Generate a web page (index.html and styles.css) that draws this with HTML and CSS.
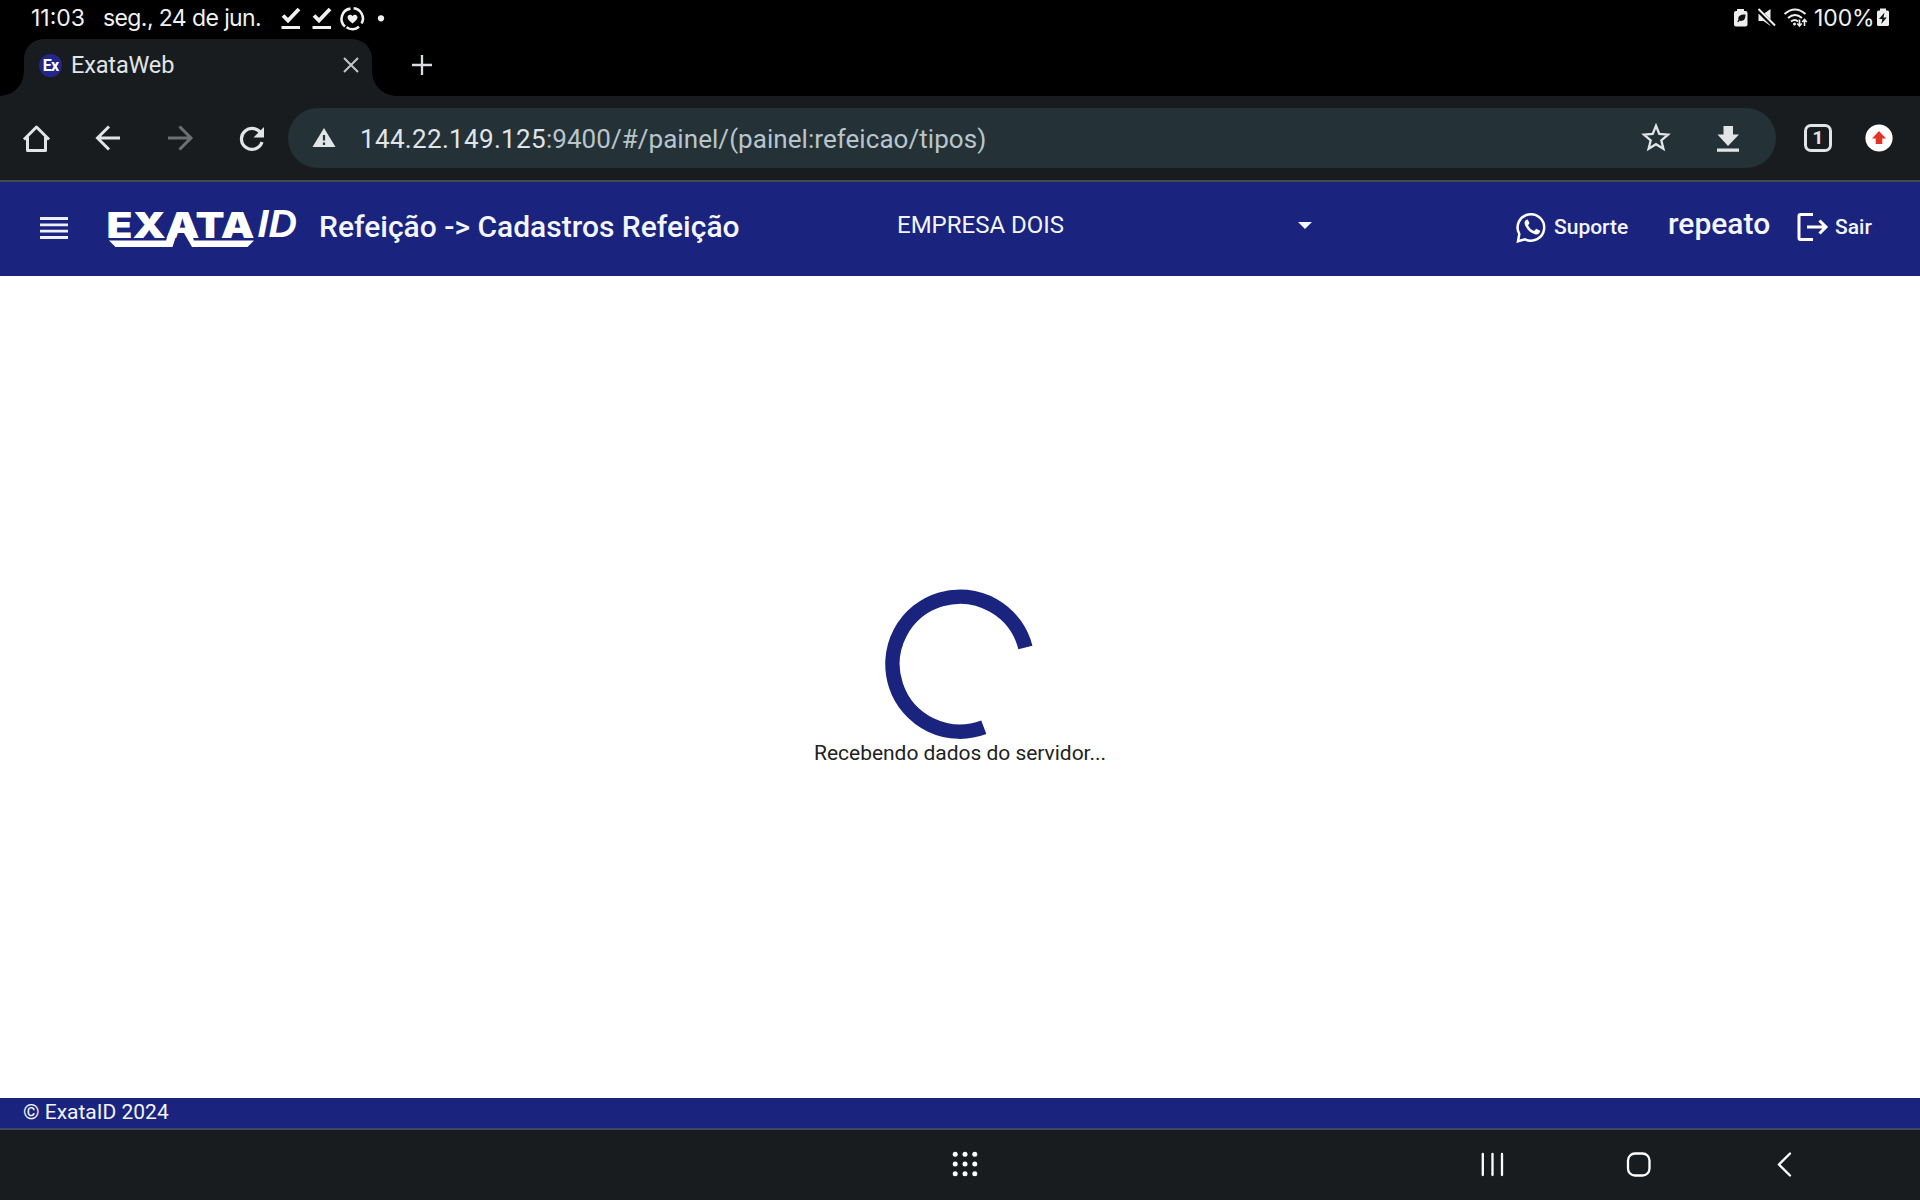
FILE: index.html
```html
<!DOCTYPE html>
<html lang="pt-BR">
<head>
<meta charset="utf-8">
<title>ExataWeb</title>
<link rel="stylesheet" href="styles.css">
</head>
<body>
<div class="status">
  <span class="clock">11:03</span>
  <span class="date">seg., 24 de jun.</span>
  <svg class="status-left" width="110" height="36" viewBox="276 0 110 36">
    <g fill="none" stroke="#f1f1f1" stroke-width="3.2"><path d="M283 15.500l5 5L299 9M314 15.500l5 5L330 9" stroke-width="3.800"/><path d="M281.500 27.500h18.500M312.500 27.500h18.500"/>
    <path d="M350.500 8.600A10.300 10.300 0 0 0 345 26.500M346.500 27.300a10.300 10.300 0 0 0 12.500-.5M361.600 23.500a10.300 10.300 0 0 0-8-15.200" stroke-width="2.600"/></g>
    <path d="M352.500 23.500c-3-2.500-5-4-5-6.300 0-2.700 3.500-3.500 5-1 1.500-2.500 5-1.700 5 1 0 2.300-2 3.800-5 6.300z" fill="#f1f1f1"/>
    <circle cx="381" cy="18.300" r="3.100" fill="#f1f1f1"/>
  </svg>
  <svg class="status-right" width="80" height="36" viewBox="1731 0 80 36">
    <path fill="#eee" d="M1737 9h7v2h1.500q2 0 2 2v11.500q0 2-2 2h-9.500q-2 0-2-2V13q0-2 2-2h1z"/>
    <path fill="#111" d="M1745.500 14.500c-4.500-.3-8 1.500-7 5.300l-1.300 1.700 1 .8 1.300-1.500c4.500.7 6-2 6-6.300z"/>
    <path fill="#eee" d="M1758.500 14h5l7-5v17l-7-5h-5z"/><path d="M1757.500 9.500l17 17" stroke="#000" stroke-width="4"/><path d="M1758.500 9l16.500 16.500" stroke="#eee" stroke-width="2"/>
    <g fill="none" stroke="#eee" stroke-width="2"><path d="M1784.500 14q10.500-9 21 0M1788 18q7-6 14 0M1791 21.500q4-3 7 0" /><path d="M1799.500 19.500v6m-2.200-2l2.200 2.500 2.200-2.500M1804.500 26v-6m-2.200 2l2.200-2.500 2.200 2.500" stroke-width="1.600"/></g>
    <circle cx="1794.500" cy="24" r="1.500" fill="#eee"/>
  </svg>
  <span class="percent">100%</span>
  <svg class="battery" width="14" height="36" viewBox="1876 0 14 36"><path fill="#eee" d="M1880 8.500h6v2h1.500q1.500 0 1.500 1.500v12.500q0 1.500-1.500 1.500h-9q-1.500 0-1.500-1.500V12q0-1.500 1.500-1.500h1.500z"/><path fill="#111" d="M1884.500 12.500l-5.500 6.500h3.300l-1 5 5.500-6.500h-3.300z"/></svg>
</div>
<div class="tabs">
  <div class="tab">
    <span class="favicon">Ex</span><span class="tab-title">ExataWeb</span>
    <svg class="close" width="16" height="16" viewBox="0 0 16 16"><path d="M1 1l14 14M15 1L1 15" stroke="#c3c7c9" stroke-width="2"/></svg>
  </div>
  <svg class="plus" width="20" height="20" viewBox="0 0 20 20"><path d="M10 0v20M0 10h20" stroke="#d8dcde" stroke-width="2.300"/></svg>
</div>
<div class="toolbar">
  <svg class="nav" width="288" height="84" viewBox="0 96 288 84" fill="none" stroke="#e1e5e8" stroke-width="3">
    <path d="M24 139.500L36.500 127 49 139.500M27.500 137v13.500h18V137" stroke-linejoin="round"/>
    <path d="M120 138H98M109 126.500L97.500 138l11.500 11.500"/>
    <path d="M168 138h22M179.500 126.500L191 138l-11.500 11.500" stroke="#6c7072"/>
    <path d="M261.500 134.500A10.500 10.500 0 1 0 262 142" stroke-width="3.200"/><path d="M264 127v10.500h-10.500z" fill="#e1e5e8" stroke="none"/>
  </svg>
  <div class="omnibox">
    <svg class="warn" width="24" height="20" viewBox="0 0 24 20"><path d="M12 0l11.500 19H.5z" fill="#e1e5e8"/><path d="M12 7v5.500M12 14.500v2.500" stroke="#24323a" stroke-width="2.200"/></svg>
    <span class="url"><span class="host">144.22.149.125</span>:9400/#/painel/(painel:refeicao/tipos)</span>
    <svg class="actions" width="100" height="60" viewBox="1640 108 100 60"><path d="M1656 125.800l3.300 8.100 8.700.7-6.700 5.700 2.100 8.500-7.400-4.600-7.400 4.600 2.100-8.500-6.700-5.700 8.700-.7z" fill="none" stroke="#e1e5e8" stroke-width="2.300"/><path d="M1723.500 126h9.500v8.500h6L1728 146l-10.500-11.500h6zM1717 148.500h22v3.300h-22z" fill="#e1e5e8"/></svg>
  </div>
  <span class="count">1</span>
  <svg class="update" width="28" height="28" viewBox="0 0 28 28"><circle cx="14" cy="14" r="13.600" fill="#fff"/><path d="M14 7l7 7.500h-3.700V20h-6.600v-5.500H7z" fill="#df3427"/></svg>
</div>
<header class="appbar">
  <svg class="menu" width="28" height="24" viewBox="0 0 28 24"><path d="M0 2.500h28M0 8.800h28M0 15.200h28M0 21.500h28" stroke="#edf1ff" stroke-width="2.800"/></svg>
  <svg class="logo" width="192" height="60" viewBox="106 198 192 60" fill="#fff">
    <text class="logo-main" x="106.500" y="237.500" textLength="148" lengthAdjust="spacingAndGlyphs">EXATA</text>
    <text class="logo-id" x="257.500" y="237.300" textLength="39.500" lengthAdjust="spacingAndGlyphs">ID</text>
    <path d="M109 240.500h57l3-7.500h8l-4.500 14H115.500zM184 233h7l3 7.500h60l-6.500 6.500H192z"/>
  </svg>
  <h1 class="heading">Refeição -&gt; Cadastros Refeição</h1>
  <div class="company"><span>EMPRESA DOIS</span><svg width="14" height="7" viewBox="0 0 14 7"><path d="M0 0h14L7 7z" fill="#f3f5ff"/></svg></div>
  <div class="support">
    <svg width="32" height="32" viewBox="0 0 32 32"><path d="M3.300 23A13.300 13.300 0 1 1 9 28.400L2 30.300z" fill="none" stroke="#fff" stroke-width="2.500"/><path d="M11 8.500c-2.500 1-3 3.500-1.800 6 2.300 4.700 5.500 7.500 9.800 8.800 2.500.7 5-.7 5.200-3.500l-4-2-2 2.200c-3-1.200-5-3-6.200-5.700l1.500-2-1.600-3.600z" fill="#fff"/></svg>
    <span>Suporte</span>
  </div>
  <span class="user">repeato</span>
  <div class="exit">
    <svg width="32" height="28" viewBox="0 0 32 28" fill="none" stroke="#fff" stroke-width="3"><path d="M16 1.500H3.500q-1.500 0-1.500 1.500v22q0 1.500 1.500 1.500H16M10 14h19M22.500 7.500L29 14l-6.500 6.500"/></svg>
    <span>Sair</span>
  </div>
</header>
<main class="content">
  <svg class="spinner" width="150" height="150" viewBox="0 0 150 150"><path d="M140.400 58.500A67.500 67.500 0 1 0 98.800 138.300" fill="none" stroke="#1a237e" stroke-width="14.500"/></svg>
  <p class="message">Recebendo dados do servidor...</p>
</main>
<footer class="foot"><span>© ExataID 2024</span></footer>
<div class="sysnav">
  <svg class="apps" width="26" height="26" viewBox="0 0 26 26" fill="#fff"><circle cx="3.200" cy="3.200" r="2.500"/><circle cx="13" cy="3.200" r="2.500"/><circle cx="22.800" cy="3.200" r="2.500"/><circle cx="3.200" cy="13" r="2.500"/><circle cx="13" cy="13" r="2.500"/><circle cx="22.800" cy="13" r="2.500"/><circle cx="3.200" cy="22.800" r="2.500"/><circle cx="13" cy="22.800" r="2.500"/><circle cx="22.800" cy="22.800" r="2.500"/></svg>
  <svg class="keys" width="320" height="40" viewBox="1475 1144 320 40" fill="none" stroke="#fff" stroke-width="2.300" stroke-linecap="round"><path d="M1482.800 1154v21M1492.500 1154v21M1502 1154v21"/><rect x="1628" y="1153.500" width="21.500" height="22" rx="7"/><path d="M1790 1153.500l-11 11 11 11"/></svg>
</div>
</body>
</html>
```
FILE: styles.css
```css
* { box-sizing: border-box; }
body { margin: 0; width: 1920px; height: 1200px; overflow: hidden; display: flex; flex-direction: column; background: #fff; font-family: Roboto, sans-serif; white-space: nowrap; }
svg { display: block; flex: none; }

.status { height: 39px; background: #000; color: #f1f1f1; display: flex; font: 23px/36px Inter, sans-serif; }
.clock { margin-left: 31px; width: 72px; letter-spacing: 0; }
.date { width: 173px; letter-spacing: -0.6px; }
.status-right { margin-left: 1345px; }
.percent { width: 62px; margin-left: 3px; letter-spacing: -0.1px; }

.tabs { height: 57px; background: #000; display: flex; align-items: center; }
.tab { position: relative; margin-left: 24px; width: 348px; height: 57px; padding: 0 13px 5px 15px; border-radius: 20px 20px 0 0; background: #191c1f; display: flex; align-items: center; }
.tab::before, .tab::after { content: ""; position: absolute; bottom: 0; width: 24px; height: 24px; }
.tab::before { left: -24px; background: radial-gradient(circle at 0 0, transparent 23.5px, #191c1f 24px); }
.tab::after { right: -24px; background: radial-gradient(circle at 100% 0, transparent 23.5px, #191c1f 24px); }
.favicon { width: 23px; height: 23px; border-radius: 50%; background: #23268a; color: #fff; font-size: 16px; font-weight: 700; line-height: 23px; text-align: center; letter-spacing: -0.7px; }
.tab-title { margin-left: 9px; color: #e1e5e8; font-size: 23.5px; letter-spacing: -0.15px; }
.close { margin-left: auto; }
.plus { margin: 0 0 6px 40px; }

.toolbar { height: 86px; background: #191c1f; border-bottom: 2px solid #414b4b; display: flex; align-items: center; }
.omnibox { width: 1488px; height: 60px; border-radius: 30px; background: #243238; display: flex; align-items: center; }
.warn { margin-left: 24px; }
.url { margin: 2px 0 0 24px; font-size: 26px; letter-spacing: 0.05px; color: #b9c5cc; }
.host { color: #e1e5e8; letter-spacing: 0.33px; }
.actions { margin: 0 36px 0 auto; }
.count { margin-left: 28px; width: 28px; height: 28px; border: 3px solid #e1e5e8; border-radius: 7px; color: #e1e5e8; font-size: 19px; font-weight: 700; line-height: 22px; text-align: center; }
.update { margin-left: 33px; }

.appbar { height: 94px; padding-bottom: 3px; background: #1a237e; color: #f3f5ff; display: flex; align-items: center; }
.menu { margin-left: 40px; }
.logo { margin-left: 38px; overflow: visible; }
.logo-main { font: 900 35px Inter, sans-serif; }
.logo-id { font: italic 700 38px "Liberation Sans", sans-serif; }
.heading { margin: 0 0 2px 21px; width: 423px; font-size: 30px; font-weight: 500; }
.company { width: 415px; margin: 0 0 5px 155px; display: flex; align-items: center; justify-content: space-between; font-size: 24px; }
.support { margin: 0 0 2px 204px; width: 152px; display: flex; align-items: center; gap: 6px; font-size: 21px; font-weight: 500; }
.user { width: 129px; margin-bottom: 8px; font-size: 30px; font-weight: 500; }
.exit { margin-bottom: 2px; display: flex; align-items: center; gap: 6px; font-size: 21px; font-weight: 500; }

.content { height: 822px; padding-top: 313px; display: flex; flex-direction: column; align-items: center; }
.message { margin: 0; color: #222; font-size: 21px; line-height: 28px; letter-spacing: -0.03px; }
.foot { height: 32px; background: #1a237e; border-bottom: 2px solid #414563; padding-left: 23px; color: #f3f5ff; font-size: 21px; line-height: 29px; letter-spacing: 0; }
.sysnav { flex: 1; padding-bottom: 2px; background: #191c1f; display: flex; align-items: center; }
.apps { margin-left: 952px; }
.keys { margin-left: 497px; }
```
